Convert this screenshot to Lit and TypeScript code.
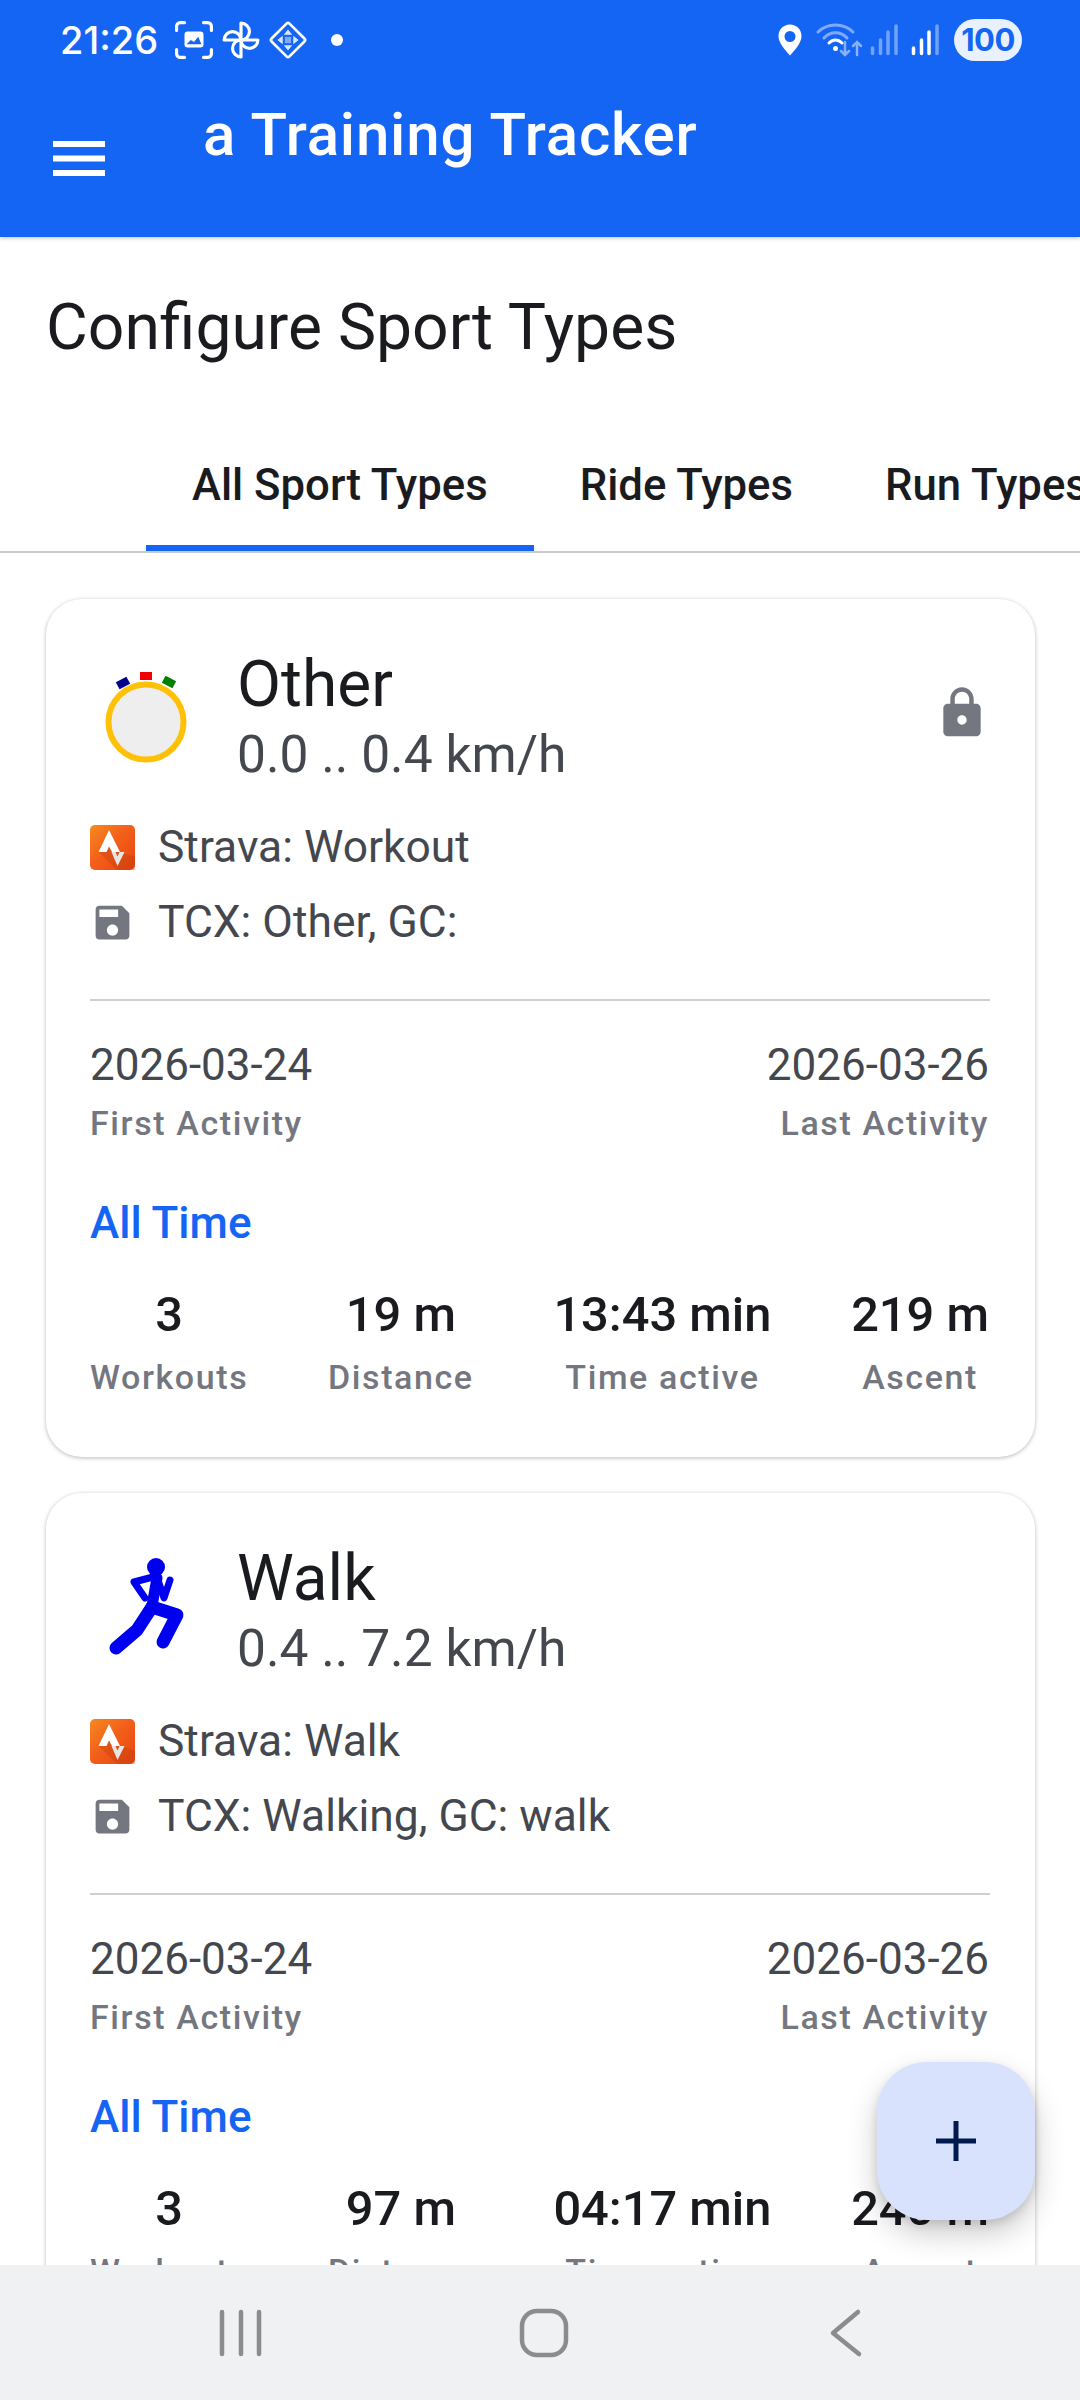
import { LitElement, html, css, svg } from 'lit'
import { customElement } from 'lit/decorators.js'

interface Sport {
  name: string
  speed: string
  strava: string
  tcx: string
  icon: 'watch' | 'runner'
  locked: boolean
  stats: [string, string][]
}

const SPORTS: Sport[] = [
  {
    name: 'Other',
    speed: '0.0 .. 0.4 km/h',
    strava: 'Strava: Workout',
    tcx: 'TCX: Other, GC:',
    icon: 'watch',
    locked: true,
    stats: [
      ['3', 'Workouts'],
      ['19 m', 'Distance'],
      ['13:43 min', 'Time active'],
      ['219 m', 'Ascent'],
    ],
  },
  {
    name: 'Walk',
    speed: '0.4 .. 7.2 km/h',
    strava: 'Strava: Walk',
    tcx: 'TCX: Walking, GC: walk',
    icon: 'runner',
    locked: false,
    stats: [
      ['3', 'Workouts'],
      ['97 m', 'Distance'],
      ['04:17 min', 'Time active'],
      ['240 m', 'Ascent'],
    ],
  },
]

const watchIcon = svg`
  <circle cx="56" cy="62" r="37.5" fill="#eeeeee" stroke="#ffc107" stroke-width="6" />
  <rect x="50" y="12" width="12" height="8" fill="#f00000" />
  <rect x="27" y="19" width="12" height="8" fill="#00008b" transform="rotate(-28 33 23)" />
  <rect x="73" y="18" width="12" height="8" fill="#008000" transform="rotate(28 79 22)" />
`

const runnerIcon = svg`
  <g fill="none" stroke="#0000f0" stroke-linecap="round" stroke-linejoin="round">
    <circle cx="66" cy="13" r="9" fill="#0000f0" stroke="none" />
    <path d="M67 24L62 52" stroke-width="11" />
    <path d="M63 23L44 28L55 44" stroke-width="7" />
    <path d="M68 26L74 44L80 26" stroke-width="7" />
    <path d="M62 53L87 61L73 88" stroke-width="13" />
    <path d="M62 53L47 76L26 94" stroke-width="13" />
  </g>
`

const stravaIcon = html`
  <svg class="strava" viewBox="0 0 45 45">
    <defs>
      <linearGradient id="strava-bg" x1="0" y1="0" x2="1" y2="1">
        <stop offset="0" stop-color="#f58a20" />
        <stop offset="0.45" stop-color="#f3601a" />
        <stop offset="1" stop-color="#e8450f" />
      </linearGradient>
    </defs>
    <rect width="45" height="45" rx="5" fill="url(#strava-bg)" />
    <path d="M8.5 27L27 45H45V32L30 27L19 5Z" fill="#b5390c" opacity="0.3" />
    <path d="M19 5L8.5 27H16.5L19 21.5L22 27H30Z" fill="#ffffff" />
    <path d="M21.5 27L27.5 41L34.5 27H29.5L27.5 31.5L25.5 27Z" fill="#e6e6e6" />
  </svg>
`

@customElement('app-root')
export class AppRoot extends LitElement {
  static styles = css`
    :host {
      display: block;
      position: relative;
      width: 1080px;
      height: 2400px;
      overflow: hidden;
      background: #fff;
      font-family: Roboto, 'Noto Sans', sans-serif;
      color: #1a1b1f;
    }

    .page {
      display: flex;
      flex-direction: column;
      height: 100%;
    }

    .appbar {
      flex: none;
      height: 237px;
      background: #1565f5;
      color: #fff;
      box-shadow: 0 1px 4px rgba(0, 0, 0, 0.25);
      position: relative;
      z-index: 1;
    }

    .status {
      display: flex;
      align-items: center;
      justify-content: space-between;
      height: 80px;
      padding: 0 58px 0 60px;
    }

    .status-left,
    .status-right {
      display: flex;
      align-items: center;
    }

    .clock {
      font-family: Inter, Roboto, sans-serif;
      font-size: 38px;
      font-weight: 500;
      margin-right: 17px;
    }

    .status-left svg {
      width: 38px;
      height: 38px;
      margin-right: 9px;
      overflow: visible;
    }

    .dot {
      width: 12px;
      height: 12px;
      margin-left: 15px;
      border-radius: 50%;
      background: #fff;
    }

    .status-right svg {
      display: block;
      overflow: visible;
    }

    .pin {
      width: 24px;
      height: 32px;
      margin-right: 14px;
    }

    .wifi {
      width: 46px;
      height: 36px;
      margin-right: 9px;
    }

    .signal {
      width: 28px;
      height: 30px;
      margin-right: 13px;
    }

    .battery {
      width: 68px;
      height: 42px;
      margin-left: 1px;
      border-radius: 21px;
      background: #e9f0fe;
      color: #1565f5;
      font-family: Inter, Roboto, sans-serif;
      font-size: 31px;
      font-weight: 700;
      line-height: 42px;
      text-align: center;
      letter-spacing: -0.5px;
    }

    .toolbar {
      display: flex;
      align-items: flex-start;
      padding: 20px 0 0 53px;
    }

    .menu {
      width: 52px;
      height: 35px;
      margin-top: 41px;
      margin-right: 98px;
    }

    .title {
      font-size: 60px;
      font-weight: 500;
      line-height: 70px;
      letter-spacing: 0.8px;
      white-space: nowrap;
    }

    .content {
      flex: 1;
      min-height: 0;
      overflow: hidden;
    }

    h1 {
      margin: 0;
      padding: 52px 46px 0;
      font-size: 64.2px;
      font-weight: 400;
      line-height: 76px;
      white-space: nowrap;
    }

    .tabs {
      display: flex;
      height: 113px;
      margin-top: 73px;
      padding-left: 146px;
      border-bottom: 2px solid #c9cacd;
      overflow: hidden;
    }

    .tab {
      flex: none;
      padding: 0 46px;
      font-size: 43.7px;
      font-weight: 500;
      line-height: 94px;
      white-space: nowrap;
      position: relative;
    }

    .tab.active::after {
      content: '';
      position: absolute;
      left: 0;
      right: 0;
      bottom: 0;
      height: 6px;
      background: #1565f5;
    }

    .cards {
      display: flex;
      flex-direction: column;
      gap: 36px;
      padding: 46px 45px 0 46px;
    }

    .card {
      flex: none;
      box-sizing: border-box;
      height: 858px;
      padding: 48px 45px 0 44px;
      border-radius: 36px;
      background: #fff;
      box-shadow: 0 1px 4px rgba(0, 0, 0, 0.28);
    }

    .head {
      display: flex;
      align-items: flex-start;
      gap: 33px;
    }

    .sport-icon {
      flex: none;
      width: 114px;
      height: 114px;
      margin-top: 13px;
      overflow: visible;
    }

    .names {
      flex: 1;
    }

    .name {
      font-size: 64px;
      line-height: 76px;
    }

    .speed {
      margin-top: 4px;
      font-size: 51.5px;
      line-height: 56px;
      color: #44474e;
    }

    .lock {
      flex: none;
      width: 56px;
      height: 56px;
      margin-top: 38px;
      fill: #74777f;
    }

    .links {
      display: flex;
      flex-direction: column;
      gap: 31px;
      margin-top: 42px;
    }

    .link {
      display: flex;
      align-items: center;
      gap: 23px;
      height: 44px;
      font-size: 44.4px;
      line-height: 44px;
      color: #44474e;
    }

    .strava,
    .save {
      flex: none;
      width: 45px;
      height: 45px;
    }

    .save {
      fill: #74777f;
    }

    hr {
      margin: 55px 0 0;
      border: none;
      height: 2px;
      background: #cfd0d4;
    }

    .dates {
      display: flex;
      justify-content: space-between;
      margin-top: 39px;
      padding-right: 1px;
    }

    .date {
      font-size: 44px;
      line-height: 50px;
      color: #44474e;
    }

    .caption {
      margin-top: 13px;
      font-size: 34px;
      line-height: 40px;
      letter-spacing: 1.6px;
      font-weight: 500;
      color: #74777f;
    }

    .dates > div:last-child {
      text-align: right;
    }

    .range {
      margin-top: 55px;
      font-size: 44px;
      line-height: 50px;
      font-weight: 500;
      color: #1565f5;
    }

    .stats {
      display: flex;
      justify-content: space-between;
      margin-top: 36px;
      padding-right: 1px;
    }

    .stat {
      text-align: center;
    }

    .stat .caption {
      margin-top: 11px;
    }

    .value {
      font-size: 48.8px;
      line-height: 62px;
      font-weight: 500;
      white-space: nowrap;
    }

    .navbar {
      flex: none;
      box-sizing: border-box;
      height: 135px;
      padding: 0 204px 0 211px;
      display: flex;
      align-items: center;
      justify-content: space-between;
      background: #f0f1f3;
      position: relative;
      z-index: 1;
    }

    .navbar svg {
      width: 60px;
      height: 60px;
      fill: none;
      stroke: #8c8c8c;
      stroke-width: 4.5;
      stroke-linecap: round;
      stroke-linejoin: round;
    }

    .fab {
      position: absolute;
      left: 877px;
      top: 2062px;
      width: 158px;
      height: 158px;
      border-radius: 50px;
      background: #d8e2fc;
      display: flex;
      align-items: center;
      justify-content: center;
      box-shadow: 0 14px 30px rgba(0, 0, 0, 0.2), 0 4px 10px rgba(0, 0, 0, 0.12);
      z-index: 2;
    }

    .fab svg {
      width: 40px;
      height: 40px;
      fill: #001a4d;
    }
  `

  private renderStatusBar() {
    return html`
      <div class="status">
        <div class="status-left">
          <span class="clock">21:26</span>
          <svg viewBox="0 0 36 36" fill="none" stroke="#fff" stroke-width="3" stroke-linecap="round">
            <path d="M1.5 9V5A3.5 3.5 0 0 1 5 1.5H9M27 1.5H31A3.5 3.5 0 0 1 34.5 5V9M34.5 27V31A3.5 3.5 0 0 1 31 34.5H27M9 34.5H5A3.5 3.5 0 0 1 1.5 31V27" />
            <rect x="9" y="10" width="18" height="15" rx="3" fill="#fff" stroke="none" />
            <path d="M11 22L15 18L18 20L22 15L25 22Z" fill="#1565f5" stroke="none" />
          </svg>
          <svg viewBox="0 0 36 36" fill="none" stroke="#fff" stroke-width="3" stroke-linejoin="round">
            <path d="M18 18V2A8 8 0 0 1 18 18Z" />
            <path d="M18 18H2A8 8 0 0 1 18 18Z" />
            <path d="M18 18V34A8 8 0 0 1 18 18Z" />
            <path d="M18 18H34A8 8 0 0 1 18 18Z" />
          </svg>
          <svg viewBox="0 0 36 36" fill="none" stroke="#fff" stroke-linejoin="round">
            <rect x="6" y="6" width="24" height="24" rx="2" stroke-width="2.5" transform="rotate(45 18 18)" />
            <path d="M18 8L22 13H14ZM18 28L14 23H22ZM8 18L13 14V22ZM28 18L23 22V14Z" fill="#fff" stroke="none" opacity="0.85" />
            <path d="M15 15H21V21H15Z" fill="#fff" stroke="none" opacity="0.45" />
          </svg>
          <span class="dot"></span>
        </div>
        <div class="status-right">
          <svg class="pin" viewBox="0 0 24 32">
            <path fill-rule="evenodd" fill="#fff" d="M12 0.5C5.4 0.5 0.5 5.5 0.5 12C0.5 19 7.5 26.5 12 31.5C16.5 26.5 23.5 19 23.5 12C23.5 5.5 18.6 0.5 12 0.5ZM12 7A5.5 5.5 0 1 1 12 18A5.5 5.5 0 0 1 12 7Z" />
          </svg>
          <svg class="wifi" viewBox="0 0 46 36" fill="none" stroke-linecap="round">
            <path d="M2 10C11 0.5 28 0.5 37 10M8 16C14 9 25 9 31 16" stroke="#fff" stroke-opacity="0.45" stroke-width="3" />
            <path d="M13 21C17 17 22 17 26 21" stroke="#fff" stroke-width="3" />
            <circle cx="19.5" cy="26.5" r="2.5" fill="#fff" />
            <path d="M29 20V33M25 29L29 33L33 29M41 33V20M37 24L41 20L45 24" stroke="#fff" stroke-opacity="0.5" stroke-width="2.5" />
          </svg>
          ${this.renderSignal(0)}
          ${this.renderSignal(3)}
          <div class="battery">100</div>
        </div>
      </div>
    `
  }

  private renderSignal(lit: number) {
    const bars = [
      { x: 1.5, h: 7 },
      { x: 9.5, h: 15 },
      { x: 17, h: 23 },
      { x: 25, h: 29 },
    ]
    return html`
      <svg class="signal" viewBox="0 0 28 30" stroke-linecap="round" stroke-width="3.5">
        ${bars.map(
          (b, i) => svg`<line x1=${b.x} x2=${b.x} y1=${30 - b.h} y2="28.5" stroke="#fff" stroke-opacity=${i < lit ? 1 : 0.4} />`,
        )}
      </svg>
    `
  }

  private renderCard(s: Sport) {
    return html`
      <section class="card">
        <div class="head">
          <svg class="sport-icon" viewBox="0 0 114 114">
            ${s.icon === 'watch' ? watchIcon : runnerIcon}
          </svg>
          <div class="names">
            <div class="name">${s.name}</div>
            <div class="speed">${s.speed}</div>
          </div>
          ${s.locked
            ? html`<svg class="lock" viewBox="0 0 24 24">
                <path d="M18 8h-1V6c0-2.76-2.24-5-5-5S7 3.24 7 6v2H6c-1.1 0-2 .9-2 2v10c0 1.1.9 2 2 2h12c1.1 0 2-.9 2-2V10c0-1.1-.9-2-2-2zm-6 9c-1.1 0-2-.9-2-2s.9-2 2-2 2 .9 2 2-.9 2-2 2zm3.1-9H8.9V6c0-1.71 1.39-3.1 3.1-3.1 1.71 0 3.1 1.39 3.1 3.1v2z" />
              </svg>`
            : ''}
        </div>
        <div class="links">
          <div class="link">${stravaIcon}<span>${s.strava}</span></div>
          <div class="link">
            <svg class="save" viewBox="0 0 24 24">
              <path d="M17 3H5c-1.11 0-2 .9-2 2v14c0 1.1.89 2 2 2h14c1.1 0 2-.9 2-2V7l-4-4zm-5 16c-1.66 0-3-1.34-3-3s1.34-3 3-3 3 1.34 3 3-1.34 3-3 3zm3-10H5V5h10v4z" />
            </svg>
            <span>${s.tcx}</span>
          </div>
        </div>
        <hr />
        <div class="dates">
          <div><div class="date">2026-03-24</div><div class="caption">First Activity</div></div>
          <div><div class="date">2026-03-26</div><div class="caption">Last Activity</div></div>
        </div>
        <div class="range">All Time</div>
        <div class="stats">
          ${s.stats.map(
            ([v, l]) => html`<div class="stat"><div class="value">${v}</div><div class="caption">${l}</div></div>`,
          )}
        </div>
      </section>
    `
  }

  render() {
    return html`
      <div class="page">
        <header class="appbar">
          ${this.renderStatusBar()}
          <div class="toolbar">
            <svg class="menu" viewBox="0 0 52 35" fill="#fff">
              <rect y="0" width="52" height="6" />
              <rect y="14.5" width="52" height="6" />
              <rect y="29" width="52" height="6" />
            </svg>
            <div class="title">a Training Tracker</div>
          </div>
        </header>
        <main class="content">
          <h1>Configure Sport Types</h1>
          <div class="tabs">
            <div class="tab active">All Sport Types</div>
            <div class="tab">Ride Types</div>
            <div class="tab">Run Types</div>
          </div>
          <div class="cards">${SPORTS.map((s) => this.renderCard(s))}</div>
        </main>
        <nav class="navbar">
          <svg viewBox="0 0 60 60"><path d="M11 9V51M30 9V51M48 9V51" /></svg>
          <svg viewBox="0 0 60 60"><rect x="8" y="8" width="44" height="44" rx="15" /></svg>
          <svg viewBox="0 0 60 60"><path d="M42 9L17 30L43 51" /></svg>
        </nav>
      </div>
      <div class="fab">
        <svg viewBox="0 0 40 40"><path d="M17.5 0h5v17.5H40v5H22.5V40h-5V22.5H0v-5h17.5z" /></svg>
      </div>
    `
  }
}
